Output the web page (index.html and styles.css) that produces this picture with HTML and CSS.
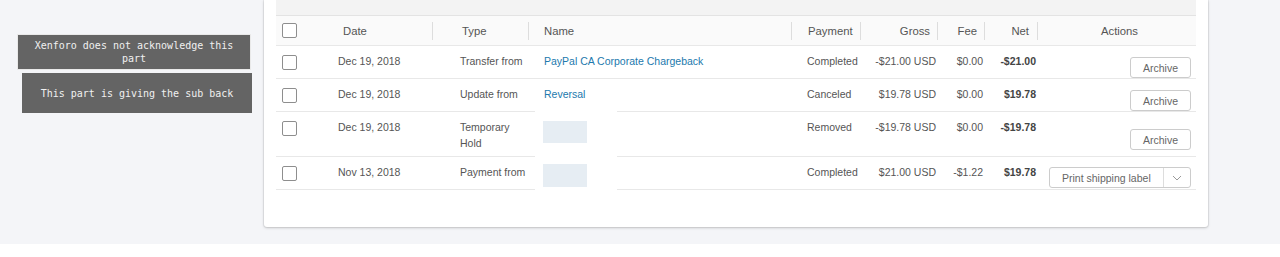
FILE: index.html
```html
<!DOCTYPE html>
<html lang="en">
<head>
<meta charset="utf-8">
<title>Activity</title>
<link rel="stylesheet" href="styles.css">
</head>
<body>
<div class="page">
  <aside class="notes">
    <div class="note note-a">Xenforo does not acknowledge this<br>part</div>
    <div class="note note-b">This part is giving the sub back</div>
  </aside>
  <main class="card">
    <div class="summary"></div>
    <div class="table">
      <div class="smudge"></div>
      <div class="row head">
        <div class="c chk"><span class="box"></span></div>
        <div class="c h-date sep">Date</div>
        <div class="c h-type sep">Type</div>
        <div class="c h-name sep">Name</div>
        <div class="c h-pay sep">Payment</div>
        <div class="c h-num sep">Gross</div>
        <div class="c h-num sep">Fee</div>
        <div class="c h-num h-net sep">Net</div>
        <div class="c h-act">Actions</div>
      </div>

      <div class="row">
        <div class="c chk"><span class="box"></span></div>
        <div class="c date">Dec 19, 2018</div>
        <div class="c type">Transfer from</div>
        <div class="c name"><a class="link" href="#">PayPal CA Corporate Chargeback</a></div>
        <div class="c pay">Completed</div>
        <div class="c num">-$21.00 USD</div>
        <div class="c num">$0.00</div>
        <div class="c num net">-$21.00</div>
        <div class="c act"><button class="btn">Archive</button></div>
      </div>

      <div class="row">
        <div class="c chk"><span class="box"></span></div>
        <div class="c date">Dec 19, 2018</div>
        <div class="c type">Update from</div>
        <div class="c name"><a class="link" href="#">Reversal</a></div>
        <div class="c pay">Canceled</div>
        <div class="c num">$19.78 USD</div>
        <div class="c num">$0.00</div>
        <div class="c num net">$19.78</div>
        <div class="c act"><button class="btn">Archive</button></div>
      </div>

      <div class="row tall">
        <div class="c chk"><span class="box"></span></div>
        <div class="c date">Dec 19, 2018</div>
        <div class="c type">Temporary<br>Hold</div>
        <div class="c name"><span class="redacted"></span></div>
        <div class="c pay">Removed</div>
        <div class="c num">-$19.78 USD</div>
        <div class="c num">$0.00</div>
        <div class="c num net">-$19.78</div>
        <div class="c act"><button class="btn">Archive</button></div>
      </div>

      <div class="row">
        <div class="c chk"><span class="box"></span></div>
        <div class="c date">Nov 13, 2018</div>
        <div class="c type">Payment from</div>
        <div class="c name"><span class="redacted low"></span></div>
        <div class="c pay">Completed</div>
        <div class="c num">$21.00 USD</div>
        <div class="c num">-$1.22</div>
        <div class="c num net">$19.78</div>
        <div class="c act act-split">
          <div class="split">
            <button class="split-main">Print shipping label</button>
            <button class="split-caret" aria-label="More">
              <svg width="10" height="6" viewBox="0 0 10 6"><polyline points="1,1 5,5 9,1" fill="none" stroke="#9a9a9a" stroke-width="1"/></svg>
            </button>
          </div>
        </div>
      </div>
    </div>
  </main>
</div>
</body>
</html>
```

FILE: styles.css
```css
* { box-sizing: border-box; }

html, body {
  margin: 0;
  padding: 0;
  background: #ffffff;
}

body {
  font-family: "Liberation Sans", Arial, sans-serif;
  font-size: 10.5px;
  color: #555555;
}

.page {
  display: flex;
  align-items: flex-start;
  height: 244px;
  background: #f4f5f8;
}

/* left annotation labels */
.notes {
  width: 264px;
  flex: 0 0 264px;
  padding: 35px 0 0 18px;
  display: flex;
  flex-direction: column;
}

.note {
  background: #646464;
  color: #f0f0f0;
  font-family: "DejaVu Sans Mono", "Liberation Mono", monospace;
  font-size: 10px;
  text-align: center;
}

.note-a {
  width: 232px;
  height: 34px;
  padding-top: 4px;
  line-height: 13px;
  box-shadow: 0 0 0 1px #e9e9e9;
}

.note-b {
  width: 230px;
  height: 40px;
  margin: 4px 0 0 4px;
  display: flex;
  align-items: center;
  justify-content: center;
  line-height: 13px;
}

/* card */
.card {
  width: 944px;
  flex: 0 0 944px;
  background: #ffffff;
  padding: 0 12px 37px;
  border-radius: 0 0 3px 3px;
  box-shadow: 0 0 0 1px rgba(0, 0, 0, 0.05), 0 1px 3px rgba(0, 0, 0, 0.18);
}

.summary {
  height: 16px;
  background: #f3f3f3;
  border-bottom: 1px solid #e3e3e3;
}

.table {
  position: relative;
}

.smudge {
  position: absolute;
  left: 259px;
  top: 93px;
  width: 82px;
  height: 86px;
  background: #ffffff;
  z-index: 1;
}

.row {
  display: grid;
  grid-template-columns: 46px 111px 96px 263px 69px 77px 47px 53px 158px;
  align-items: start;
  border-bottom: 1px solid #e8e8e8;
}

.c {
  line-height: 16px;
  padding: 7px 0 5px;
  white-space: nowrap;
}

.chk {
  padding: 9px 0 0 6px;
}

.box {
  display: block;
  width: 15px;
  height: 15px;
  border: 1px solid #8e8e8e;
  border-radius: 2px;
  background: #ffffff;
}

.date { padding-left: 16px; }
.type { padding-left: 27px; }
.name { padding-left: 15px; position: relative; z-index: 2; }
.pay { padding-left: 15px; }
.num { text-align: right; padding-right: 2px; }
.net { font-weight: bold; color: #444444; }

.link {
  color: #2279ad;
  text-decoration: none;
}

.redacted {
  display: block;
  width: 44px;
  height: 22px;
  margin: 2px 0 -8px -1px;
  background: #e6edf3;
}

.redacted.low {
  margin-top: 0;
  height: 23px;
}

/* header row */
.head {
  height: 30px;
  align-items: center;
  background: #fafafa;
  color: #555555;
  font-size: 11.3px;
}

.head .c {
  padding: 1px 0;
  line-height: 16px;
}

.head .chk {
  padding: 0 0 0 6px;
}

.sep {
  border-right: 1px solid #dddddd;
}

.h-date { padding-left: 21px !important; }
.h-type { padding-left: 29px !important; }
.h-name { padding-left: 15px !important; }
.h-pay { padding-left: 16px !important; }
.h-num { text-align: right; padding-right: 7px !important; }
.h-net { padding-right: 8px !important; }
.h-act { text-align: center; padding-left: 5px !important; }

/* actions */
.act {
  display: flex;
  justify-content: flex-end;
  padding: 11px 5px 0 0;
}

.tall .act {
  padding: 17px 5px 6px 0;
}

.act-split {
  padding-top: 10px;
  padding-bottom: 1px;
}

.btn {
  width: 61px;
  height: 21px;
  padding: 0;
  border: 1px solid #cccccc;
  border-radius: 3px;
  background: #ffffff;
  color: #666666;
  font-family: "Liberation Sans", Arial, sans-serif;
  font-size: 10.5px;
}

.split {
  display: flex;
  height: 21px;
  border: 1px solid #cccccc;
  border-radius: 3px;
  background: #ffffff;
}

.split button {
  border: 0;
  background: transparent;
  padding: 0;
  font-family: "Liberation Sans", Arial, sans-serif;
  font-size: 10.5px;
  color: #666666;
}

.split-main {
  width: 113px;
  text-align: left;
  padding-left: 12px !important;
}

.split-caret {
  width: 27px;
  border-left: 1px solid #dddddd !important;
  display: flex;
  align-items: center;
  justify-content: center;
}

.split-caret svg {
  display: block;
}
```
